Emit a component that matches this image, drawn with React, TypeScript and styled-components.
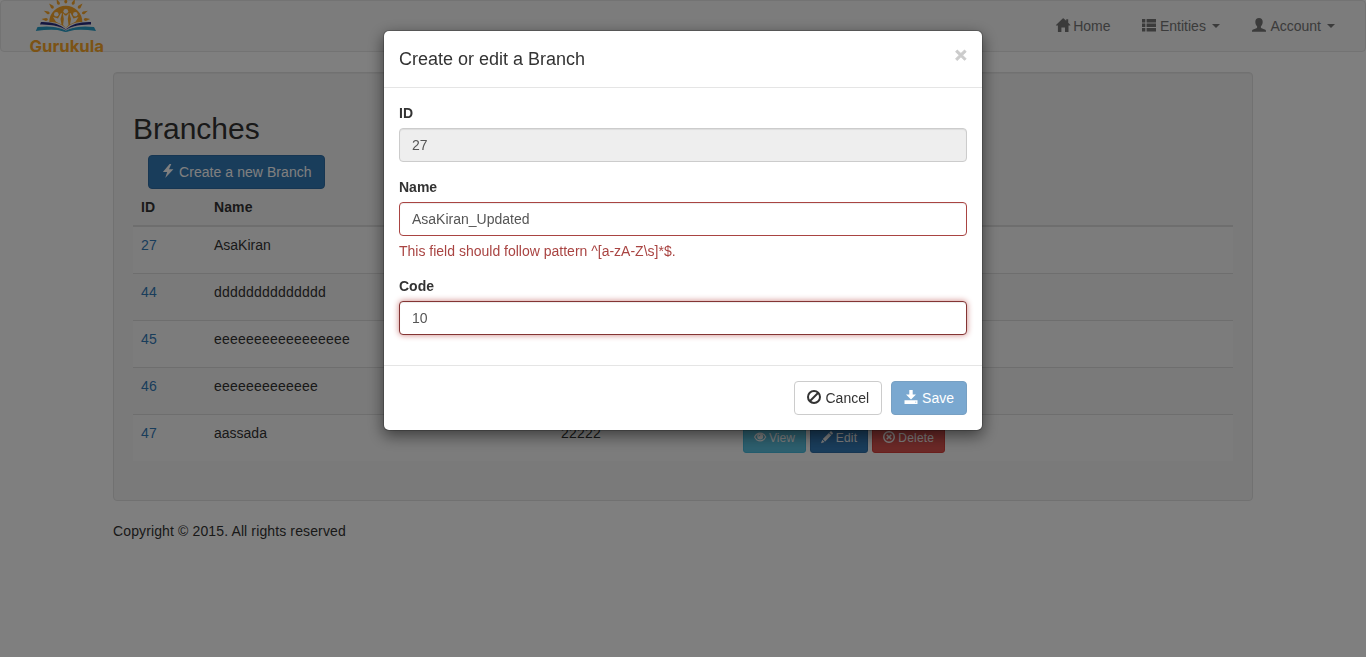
import React from 'react';
import styled, { createGlobalStyle, css } from 'styled-components';

const GlobalStyle = createGlobalStyle`
  *, *::before, *::after { box-sizing: border-box; }
  html, body { margin: 0; padding: 0; height: 100%; }
  body {
    background: #fff;
    color: #333;
    font-family: "Liberation Sans", Arial, Helvetica, sans-serif;
    font-size: 14px;
    line-height: 20px;
    overflow: hidden;
  }
`;

/* ---------- icons ---------- */

const Glyph = styled.svg`
  display: block;
  flex: none;
  width: 1em;
  height: 1em;
  margin-bottom: 2px;
  fill: currentColor;
  overflow: visible;
`;

const icons = {
  home: <path d="M0 6.900 L6.700 0.400 Q7.200 0 7.700 0.400 L10.200 2.800 V1.200 H12.200 V4.800 L14.400 6.900 Q14.700 7.400 14.200 7.400 H12.500 V13.700 Q12.500 14 12.200 14 H9 V9.500 H5.400 V14 H2.300 Q1.900 14 1.900 13.700 V7.400 H0.200 Q-.3 7.400 0 6.900Z" />,
  list: (
    <path d="M0 1h3.300v3.400H0ZM4.600 1H14v3.400H4.600ZM0 5.500h3.300v3.500H0ZM4.600 5.500H14v3.500H4.600ZM0 10.100h3.300v3.500H0ZM4.600 10.100H14v3.500H4.600Z" />
  ),
  user: <path d="M7 0C9.300 0 10.700 1.500 10.700 3.700C10.700 5.900 9.900 7.200 8.900 8.200V9.200C8.900 9.900 9.300 10.200 10.200 10.500L12.800 11.500C13.700 11.900 14 12.300 14 13.200V13.700H0V13.200C0 12.300 .3 11.900 1.200 11.500L3.800 10.500C4.700 10.200 5.100 9.900 5.100 9.200V8.200C4.100 7.200 3.300 5.900 3.300 3.700C3.300 1.500 4.700 0 7 0Z" />,
  flash: <path d="M8.600 0 L1.900 8 H6.200 L4.200 14 L12.400 5.200 H8 L10.300 0Z" />,
  ban: (
    <g fill="none" stroke="currentColor" strokeWidth="2">
      <circle cx="7" cy="7" r="6" />
      <path d="M11 3L3 11" />
    </g>
  ),
  save: <path fillRule="evenodd" d="M5.300 0H8.700V4.500H12L7 9.600L2 4.500H5.300ZM.5 10.300H13.500V14H.5ZM11.200 11.700V12.500H12.200V11.700Z" />,
  eye: (
    <>
      <path fill="none" stroke="currentColor" strokeWidth="1.300" d="M.7 7C2.200 4 4.300 2.500 7.200 2.500S12.200 4 13.700 7C12.200 10 10.100 11.500 7.200 11.500S2.200 10 .7 7Z" />
      <path fillRule="evenodd" d="M7.200 2.800a3.500 3.500 0 1 1 0 7a3.500 3.500 0 0 1 0-7ZM5.200 6.400Q5.200 4.400 7.200 4.300V5.200Q6.200 5.300 6.100 6.400Z" />
    </>
  ),
  pencil: <path d="M10.900.7Q11.700 0 12.400.7L13.600 1.900Q14.300 2.700 13.600 3.400L12.600 4.400L9.800 1.700ZM9.200 2.300L12 5.100L4.900 12.200L2.100 9.400ZM1.500 10.100L4.200 12.800L0 14.200Z" />,
  remove: <path fillRule="evenodd" d="M7 0a7 7 0 1 1 0 14a7 7 0 0 1 0-14ZM7 1.700a5.300 5.300 0 1 0 0 10.600a5.300 5.300 0 0 0 0-10.600ZM5 3.700L7 5.700L9 3.700L10.300 5L8.300 7L10.300 9L9 10.300L7 8.300L5 10.300L3.700 9L5.700 7L3.700 5Z" />,
};

const Icon = ({ name }: { name: keyof typeof icons }) => (
  <Glyph viewBox="0 0 14 14" aria-hidden="true">{icons[name]}</Glyph>
);

/* ---------- navigation ---------- */

const Navbar = styled.nav`
  display: flex;
  justify-content: space-between;
  align-items: flex-start;
  height: 52px;
  padding: 0 15px 0 27px;
  margin-bottom: 20px;
  background: #f8f8f8;
  border: 1px solid #e7e7e7;
  border-radius: 4px;
`;

const LogoSvg = styled.svg`
  display: block;
  width: 78px;
  height: 56px;
  margin-top: -1px;
  overflow: visible;
`;

const rays = [-84, -64, -43, -22, 0, 22, 43, 64, 84];

const Logo = () => (
  <LogoSvg viewBox="28 0 78 56" role="img" aria-label="Gurukula">
    <g fill="#f9a72b">
      {rays.map((a) => (
        <path key={a} transform={`rotate(${a} 65.800 21.500)`} d="M65.800 -3L67.300 1.500Q67.200 3.300 65.800 3.500Q64.400 3.300 64.300 1.500Z" />
      ))}
      <path d="M49.300 22A16.500 16.300 0 0 1 82.300 22Q73 21.500 65.800 28Q58.500 21.500 49.300 22Z" />
    </g>
    <g fill="#f8f8f8">
      <circle cx="65.800" cy="11.300" r="2.400" />
      <circle cx="56.300" cy="14.300" r="2.300" />
      <circle cx="75.300" cy="14.300" r="2.300" />
      <path d="M53 17L58 18.500L61 13L62 13.500L60.500 19L61.500 24.500L56 21.700Z" />
      <path d="M78.500 17L73.500 18.500L70.500 13L69.500 13.500L71 19L70 24.500L75.500 21.700Z" />
      <path d="M62.800 13L65 15.500H66.600L68.800 13L67.800 19L68.500 25L65.800 28L63.100 25L63.800 19Z" />
    </g>
    <path fill="#2b2f83" d="M41 22Q57 21.500 65.800 29.300Q74.500 21.500 91 22V24.500Q75 24 65.800 30.500Q56 24 40 24.500Z" />
    <path fill="#2a9fc9" d="M37.500 27Q55 25 65.800 30.500Q77 25 94 27L96 31Q78 28.500 69 31.200Q65.800 32.600 62.500 31.200Q54 28.500 35.800 31Z" />
    <path fill="none" stroke="#f8f8f8" strokeWidth=".8" d="M39 25.700Q57 24.500 65.800 30Q74.500 24.500 93 25.700" />
    <text x="29.500" y="52.300" fill="#f9a72b" fontFamily="Inter, sans-serif" fontWeight="700" fontSize="16.500" textLength="74.500" lengthAdjust="spacingAndGlyphs">Gurukula</text>
  </LogoSvg>
);

const NavLinks = styled.div`
  display: flex;
  padding-top: 15px;
`;

const NavLink = styled.a<{ $gap?: number; $after?: number }>`
  display: flex;
  align-items: center;
  gap: ${(p) => p.$gap ?? 4}px;
  height: 20px;
  padding: 0 15px;
  margin-right: ${(p) => p.$after ?? 0}px;
  color: #777;
`;

const Caret = styled.span`
  margin-left: 2px;
  border-top: 4px solid currentColor;
  border-left: 4px solid transparent;
  border-right: 4px solid transparent;
`;

/* ---------- page ---------- */

const Container = styled.main`
  width: 1140px;
  margin: 0 auto;
`;

const Well = styled.section`
  min-height: 429px;
  padding: 19px;
  margin-bottom: 20px;
  background: #f5f5f5;
  border: 1px solid #e3e3e3;
  border-radius: 4px;
  box-shadow: inset 0 1px 1px rgba(0, 0, 0, 0.05);
`;

const Heading = styled.h2`
  margin: 20px 0 10px;
  font-size: 30px;
  line-height: 33px;
  font-weight: 500;
`;

const Toolbar = styled.div`
  display: flex;
  padding: 0 15px;
`;

type Tone = 'primary' | 'info' | 'danger' | 'plain';
const tones: Record<Tone, { bg: string; border: string; fg: string }> = {
  primary: { bg: '#337ab7', border: '#2e6da4', fg: '#fff' },
  info: { bg: '#5bc0de', border: '#46b8da', fg: '#fff' },
  danger: { bg: '#d9534f', border: '#d43f3a', fg: '#fff' },
  plain: { bg: '#fff', border: '#ccc', fg: '#333' },
};

const Button = styled.button<{ $tone: Tone; $small?: boolean; $tracking?: number }>`
  display: inline-flex;
  align-items: center;
  gap: 4px;
  height: 34px;
  padding: 0 12px;
  font: inherit;
  letter-spacing: ${(p) => p.$tracking ?? 0}px;
  white-space: nowrap;
  color: ${(p) => tones[p.$tone].fg};
  background: ${(p) => tones[p.$tone].bg};
  border: 1px solid ${(p) => tones[p.$tone].border};
  border-radius: 4px;
  ${(p) =>
    p.$small &&
    css`
      gap: 3px;
      height: 30px;
      padding: 0 10px;
      font-size: 12px;
      border-radius: 3px;
    `}
  &:disabled { opacity: 0.65; }
`;

const Row = styled.div<{ $striped?: boolean }>`
  display: grid;
  grid-template-columns: 73px 347px 182px 1fr;
  height: 47px;
  border-top: 1px solid #ddd;
  background: ${(p) => (p.$striped ? '#f9f9f9' : 'transparent')};
`;

const HeadRow = styled(Row)`
  height: 38px;
  border-top: 0;
  border-bottom: 2px solid #ddd;
  font-weight: 700;
  & + ${Row} { border-top: 0; height: 46px; }
`;

const Cell = styled.div<{ $tracking?: number }>`
  padding: 8px;
  letter-spacing: ${(p) => p.$tracking ?? 0}px;
`;

const ActionCell = styled(Cell)`
  display: flex;
  gap: 4px;
`;

const RecordLink = styled.a`
  color: #337ab7;
`;

const Footer = styled.footer`
  line-height: 20px;
  letter-spacing: 0.125px;
`;

/* ---------- dialog ---------- */

const Backdrop = styled.div`
  position: fixed;
  inset: 0;
  display: flex;
  justify-content: center;
  align-items: flex-start;
  padding-top: 30px;
  background: rgba(0, 0, 0, 0.5);
`;

const Dialog = styled.form`
  width: 600px;
  background: #fff;
  background-clip: padding-box;
  border: 1px solid rgba(0, 0, 0, 0.2);
  border-radius: 6px;
  box-shadow: 0 5px 15px rgba(0, 0, 0, 0.5);
`;

const DialogHeader = styled.header`
  display: flex;
  justify-content: space-between;
  align-items: flex-start;
  height: 57px;
  padding: 15px;
  border-bottom: 1px solid #e5e5e5;
`;

const DialogTitle = styled.h4`
  margin: 0;
  font-size: 18px;
  line-height: 26px;
  font-weight: 500;
`;

const Close = styled.button`
  margin: -2px 0 0;
  padding: 0;
  border: 0;
  background: none;
  color: #000;
  opacity: 0.2;
  font: 700 21px/21px "Liberation Sans", Arial, sans-serif;
  -webkit-text-stroke: 0.8px #000;
`;

const DialogBody = styled.div`
  padding: 15px;
`;

const Field = styled.div`
  margin-bottom: 15px;
`;

const Label = styled.label`
  display: block;
  margin-bottom: 5px;
  font-weight: 700;
`;

const Input = styled.input<{ $state?: 'invalid' | 'active' }>`
  display: block;
  width: 100%;
  height: 34px;
  padding: 6px 12px;
  font: inherit;
  color: #555;
  background: #fff;
  outline: 0;
  border: 1px solid #ccc;
  border-radius: 4px;
  box-shadow: inset 0 1px 1px rgba(0, 0, 0, 0.075);
  &:read-only { background: #eee; }
  ${(p) => p.$state === 'invalid' && css`border-color: #a94442;`}
  ${(p) =>
    p.$state === 'active' &&
    css`
      border-color: #843534;
      box-shadow: inset 0 1px 1px rgba(0, 0, 0, 0.075), 0 0 6px #ce8483;
    `}
`;

const ErrorText = styled.p`
  margin: 5px 0 0;
  color: #a94442;
`;

const DialogFooter = styled.footer`
  display: flex;
  justify-content: flex-end;
  gap: 9px;
  padding: 15px;
  border-top: 1px solid #e5e5e5;
`;

type Branch = { id: number; name: string; tracking?: number; code?: string };

const branches: Branch[] = [
  { id: 27, name: 'AsaKiran' },
  { id: 44, name: 'dddddddddddddd', tracking: 0.215 },
  { id: 45, name: 'eeeeeeeeeeeeeeeee', tracking: 0.215 },
  { id: 46, name: 'eeeeeeeeeeeee', tracking: 0.215 },
  { id: 47, name: 'aassada', code: '22222' },
];

export default function App() {
  return (
    <>
      <GlobalStyle />
      <Navbar>
        <Logo />
        <NavLinks>
          <NavLink $gap={3} $after={1.5}><Icon name="home" />Home</NavLink>
          <NavLink $after={2.5}><Icon name="list" />Entities<Caret /></NavLink>
          <NavLink><Icon name="user" />Account<Caret /></NavLink>
        </NavLinks>
      </Navbar>
      <Container>
        <Well>
          <Heading>Branches</Heading>
          <Toolbar>
            <Button $tone="primary" $tracking={0.06}><Icon name="flash" />Create a new Branch</Button>
          </Toolbar>
          <HeadRow>
            <Cell>ID</Cell>
            <Cell $tracking={0.1}>Name</Cell>
          </HeadRow>
          {branches.map((b, i) => (
            <Row key={b.id} $striped={i % 2 === 0}>
              <Cell $tracking={0.2}><RecordLink>{b.id}</RecordLink></Cell>
              <Cell $tracking={b.tracking}>{b.name}</Cell>
              {b.code && (
                <>
                  <Cell $tracking={0.215}>{b.code}</Cell>
                  <ActionCell>
                    <Button $small $tone="info"><Icon name="eye" />View</Button>
                    <Button $small $tone="primary" $tracking={0.2}><Icon name="pencil" />Edit</Button>
                    <Button $small $tone="danger" $tracking={0.2}><Icon name="remove" />Delete</Button>
                  </ActionCell>
                </>
              )}
            </Row>
          ))}
        </Well>
        <Footer>Copyright © 2015. All rights reserved</Footer>
      </Container>
      <Backdrop>
        <Dialog>
          <DialogHeader>
            <DialogTitle>Create or edit a Branch</DialogTitle>
            <Close type="button">×</Close>
          </DialogHeader>
          <DialogBody>
            <Field>
              <Label>ID</Label>
              <Input defaultValue="27" readOnly />
            </Field>
            <Field>
              <Label>Name</Label>
              <Input $state="invalid" defaultValue="AsaKiran_Updated" />
              <ErrorText>This field should follow pattern ^[a-zA-Z\s]*$.</ErrorText>
            </Field>
            <Field>
              <Label>Code</Label>
              <Input $state="active" defaultValue="10" />
            </Field>
          </DialogBody>
          <DialogFooter>
            <Button type="button" $tone="plain"><Icon name="ban" />Cancel</Button>
            <Button type="button" $tone="primary" disabled><Icon name="save" />Save</Button>
          </DialogFooter>
        </Dialog>
      </Backdrop>
    </>
  );
}
